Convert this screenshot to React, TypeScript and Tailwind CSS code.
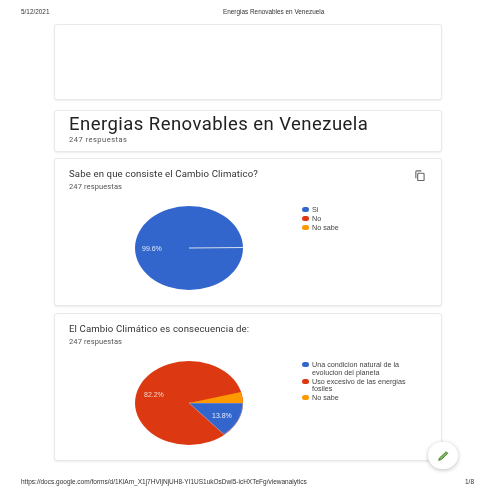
import React from "react";

const font = { fontFamily: '"Roboto", "Liberation Sans", sans-serif' };

function Legend({ color, lines }: { color: string; lines: string[] }) {
  return (
    <div className="flex items-start gap-[3px]">
      <span className="mt-[1px] w-[7px] h-[5px] rounded-full shrink-0" style={{ background: color }} />
      <div className="text-[7.2px] leading-[7.5px] text-[#444] font-['Liberation_Sans']">
        {lines.map((l) => (
          <div key={l}>{l}</div>
        ))}
      </div>
    </div>
  );
}

function Card({ title, legend, pie }: { title: string; legend: React.ReactNode; pie: React.ReactNode }) {
  return (
    <section className="h-[148px] w-[388px] bg-white rounded-[3px] border border-[#e9e9e9] shadow-[0_1px_2px_rgba(0,0,0,0.08)] relative pl-[14px] pt-[9px]">
      <h2 className="text-[9.6px] leading-[12px] text-[#333] tracking-[0.13px] font-['Roboto']">{title}</h2>
      <p className="mt-[2px] text-[7.5px] leading-[10px] text-[#555] tracking-[0.12px] font-['Roboto']">247 respuestas</p>
      <div className="flex mt-[13px]">
        <div className="w-[110px] ml-[65px] shrink-0">{pie}</div>
        <div className="ml-[58px] flex flex-col gap-[1.5px] pt-[1px]">{legend}</div>
      </div>
    </section>
  );
}

function PieOne() {
  return (
    <svg width="110" height="86" viewBox="0 0 110 86" className="block">
      <ellipse cx="55" cy="43" rx="54" ry="42" fill="#3366cc" />
      <line x1="55" y1="43" x2="109" y2="42.5" stroke="#d5deef" strokeWidth="1" />
      <text x="8" y="45.5" fontSize="7" fill="#dfe7f7" fontFamily="Liberation Sans">99.6%</text>
    </svg>
  );
}

function PieTwo() {
  const cx = 55, cy = 43, rx = 54, ry = 42;
  return (
    <svg width="110" height="86" viewBox="0 0 110 86" className="block">
      <ellipse cx={cx} cy={cy} rx={rx} ry={ry} fill="#dc3912" />
      <path d={`M${cx} ${cy} L${cx + rx} ${cy} A${rx} ${ry} 0 0 1 90 74.5 Z`} fill="#3366cc" stroke="#e6c9c0" strokeWidth="0.5" />
      <path d={`M${cx} ${cy} L${cx + rx} ${cy} A${rx} ${ry} 0 0 0 107 32 Z`} fill="#ff9900" />
      <text x="10" y="36.5" fontSize="7" fill="#f7d3c8" fontFamily="Liberation Sans">82.2%</text>
      <text x="78" y="57.5" fontSize="7" fill="#e3eaf8" fontFamily="Liberation Sans">13.8%</text>
    </svg>
  );
}

export default function App() {
  return (
    <div className="w-[495px] h-[495px] bg-white relative overflow-hidden flex flex-col blur-[0.35px]" style={font}>
      <header className="h-[24px] shrink-0 pl-[21px] relative font-['Liberation_Sans'] text-[6.4px] text-[#333]">
        <div className="flex items-center h-[24px]">
          <span className="w-[202px]">5/12/2021</span>
          <span>Energias Renovables en Venezuela</span>
        </div>
      </header>
      <main className="flex flex-col items-center pl-[1px]">
        <div className="w-[388px] h-[76px] bg-white rounded-[3px] border border-[#e9e9e9] shadow-[0_1px_2px_rgba(0,0,0,0.08)]" />
        <div className="w-[388px] h-[42px] mt-[10px] bg-white rounded-[3px] border border-[#e9e9e9] shadow-[0_1px_2px_rgba(0,0,0,0.08)] pl-[14px] pt-[2px]">
          <h1 className="text-[18.5px] leading-[22px] text-[#222] tracking-[0.45px] font-['Roboto']">Energias Renovables en Venezuela</h1>
          <p className="text-[7.5px] leading-[9px] text-[#555] tracking-[0.5px] font-['Roboto']">247 respuestas</p>
        </div>
        <div className="mt-[6px]">
          <Card
            title="Sabe en que consiste el Cambio Climatico?"
            pie={<PieOne />}
            legend={
              <>
                <Legend color="#3366cc" lines={["Si"]} />
                <Legend color="#dc3912" lines={["No"]} />
                <Legend color="#ff9900" lines={["No sabe"]} />
              </>
            }
          />
        </div>
        <div className="mt-[7px]">
          <Card
            title="El Cambio Climático es consecuencia de:"
            pie={<PieTwo />}
            legend={
              <>
                <Legend color="#3366cc" lines={["Una condicion natural de la", "evolucion del planeta"]} />
                <Legend color="#dc3912" lines={["Uso excesivo de las energias", "fosiles"]} />
                <Legend color="#ff9900" lines={["No sabe"]} />
              </>
            }
          />
        </div>
      </main>
      <svg className="absolute left-[414px] top-[170px]" width="11" height="11" viewBox="0 0 24 24" fill="none" stroke="#666" strokeWidth="2.4">
        <rect x="8" y="7" width="14" height="16" rx="2" />
        <path d="M4 18V4a2 2 0 0 1 2-2h10" />
      </svg>
      <div className="absolute left-[428px] top-[442px] w-[30px] h-[27px] rounded-full bg-white shadow-[0_1px_4px_rgba(0,0,0,0.25)] flex items-center justify-center">
        <svg width="13" height="13" viewBox="0 0 24 24">
          <path d="M3 21l1.5-4.5L17 5l3 3L8 19.5z" fill="#7cb356" stroke="#3f7d2a" strokeWidth="1.5" />
        </svg>
      </div>
      <footer className="absolute left-0 right-0 top-[478px] h-[8px] flex items-center font-['Liberation_Sans'] text-[6.5px] text-[#333] pl-[21px]">
        <span>https://docs.google.com/forms/d/1KlAm_X1j7HVIjNjUH8-YI1US1ukOsDwl5-icHXTeFg/viewanalytics</span>
        <span className="absolute left-[465px]">1/8</span>
      </footer>
    </div>
  );
}
